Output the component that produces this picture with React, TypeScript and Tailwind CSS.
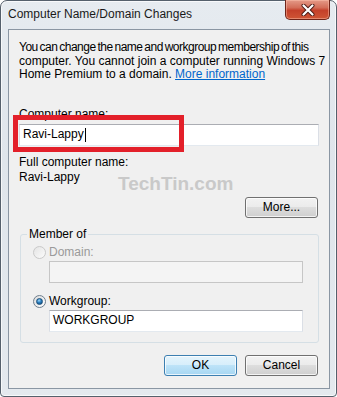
import React from "react";

function Radio({ checked, disabled }: { checked?: boolean; disabled?: boolean }) {
  if (disabled) {
    return (
      <span className="w-[13px] h-[13px] rounded-full border border-[#c9c9c9] bg-[linear-gradient(135deg,#e4e4e4,#fbfbfb)] shrink-0" />
    );
  }
  return (
    <span className="w-[13px] h-[13px] rounded-full border border-[#6f7f8e] bg-[linear-gradient(135deg,#dcdcdc,#ffffff)] shrink-0 flex items-center justify-center">
      <span className="w-[7px] h-[7px] rounded-full bg-[radial-gradient(circle_at_40%_30%,#9fd8fa_0%,#2a7fc0_45%,#0b3f6e_100%)] border border-[#1b4f7a]" />
    </span>
  );
}

function Btn({ children, def }: { children: React.ReactNode; def?: boolean }) {
  return (
    <div
      className={
        "w-[73px] h-[21px] rounded-[3px] border flex items-center justify-center text-[12px] text-black shadow-[inset_0_0_0_1px_rgba(255,255,255,0.75)] " +
        (def
          ? "border-[#3c7fb1] bg-[linear-gradient(to_bottom,#e5f4fc_0%,#d6eefb_49%,#bde3f8_50%,#a6d6f2_100%)]"
          : "border-[#707070] bg-[linear-gradient(to_bottom,#f2f2f2_0%,#ebebeb_49%,#dddddd_50%,#cfcfcf_100%)]")
      }
    >
      {children}
    </div>
  );
}

export default function App() {
  return (
    <div className="w-[337px] h-[397px] bg-white overflow-hidden font-['Liberation_Sans',Arial,sans-serif] text-black">
      <div className="relative w-full h-full rounded-t-[7px] rounded-b-[4px] border border-[#55606c] bg-[linear-gradient(to_bottom,#e6ebf0,#dfe5eb_40%,#e4e9ee)] shadow-[inset_0_0_0_1px_rgba(255,255,255,0.7)] flex flex-col">
        {/* title bar */}
        <div className="h-[28px] flex items-start shrink-0">
          <span className="pt-[6px] pl-[7px] text-[12px] leading-[14px] text-[#1a1a1a]">
            Computer Name/Domain Changes
          </span>
          <div className="ml-auto mr-[6px] -mt-[1px] w-[45px] h-[20px] rounded-b-[5px] border border-t-0 border-[#6e2419] bg-[linear-gradient(to_bottom,#e49a88_0%,#d36e59_40%,#c4402a_55%,#cf5535_100%)] shadow-[inset_0_0_0_1px_rgba(255,200,180,0.45)] flex items-center justify-center">
            <svg width="14" height="12" viewBox="0 0 14 12">
              <path d="M2.5 1.5 L11.5 10.5 M11.5 1.5 L2.5 10.5" stroke="#4a1a14" strokeWidth="4" strokeLinecap="round" />
              <path d="M2.5 1.5 L11.5 10.5 M11.5 1.5 L2.5 10.5" stroke="#ffffff" strokeWidth="2.2" strokeLinecap="round" />
            </svg>
          </div>
        </div>

        {/* client area */}
        <div className="relative ml-[7px] mr-[6px] h-[360px] shrink-0 border border-[#8a96a3] bg-[#f0f0f0] flex flex-col pl-[10px] pr-[10px] pt-[11px] text-[12px] leading-[13.5px]">
          <p className="whitespace-nowrap">
            <span className="tracking-[-0.5px] [word-spacing:-1px]">You can change the name and workgroup membership of this</span>
            <br />
            computer. You cannot join a computer running Windows 7
            <br />
            Home Premium to a domain. <span className="text-[#0066cc] underline">More information</span>
          </p>

          <div className="mt-[26px]">Computer name:</div>
          <div className="mt-[3px] h-[22px] border border-[#abadb3] border-l-[#dbdfe6] border-r-[#dbdfe6] border-b-[#e3e9ef] bg-white flex items-center pl-[3px]">
            <span>Ravi-Lappy</span>
            <span className="w-px h-[14px] bg-black ml-[1px]" />
          </div>

          <div className="mt-[10px]">Full computer name:</div>
          <div className="mt-[1px]">Ravi-Lappy</div>

          <div className="mt-[13px] self-end mr-[1px]">
            <Btn>More...</Btn>
          </div>

          <fieldset className="mt-[10px] ml-[1px] border border-[#d5dfe5] rounded-[3px] pb-[10px] pl-[12px] flex flex-col">
            <legend className="-ml-[6px] px-[2px]">Member of</legend>
            <div className="mt-[4px] flex items-center gap-[3px] text-[#9a9a9a]">
              <Radio disabled />
              <span>Domain:</span>
            </div>
            <div className="mt-[2px] ml-[16px] w-[254px] h-[22px] border border-[#c6c6c6] bg-[#f4f4f4]" />
            <div className="mt-[11.5px] flex items-center gap-[3px]">
              <Radio checked />
              <span>Workgroup:</span>
            </div>
            <div className="mt-[2px] ml-[16px] w-[254px] h-[22px] border border-[#abadb3] border-l-[#dbdfe6] border-r-[#dbdfe6] border-b-[#e3e9ef] bg-white flex items-center pl-[3px]">
              WORKGROUP
            </div>
          </fieldset>

          <div className="mt-[12px] self-end mr-[1px] flex gap-[8px]">
            <Btn def>OK</Btn>
            <Btn>Cancel</Btn>
          </div>

          {/* red annotation box */}
          <div className="absolute left-[4px] top-[85px] w-[171px] h-[37px] border-[5px] border-[#e3202a]" />

          {/* watermark */}
          <div className="absolute left-[109px] top-[143px] text-[19px] leading-[22px] font-bold text-[#c9c9c9] whitespace-nowrap">
            TechTin.com
          </div>
        </div>
      </div>
    </div>
  );
}
